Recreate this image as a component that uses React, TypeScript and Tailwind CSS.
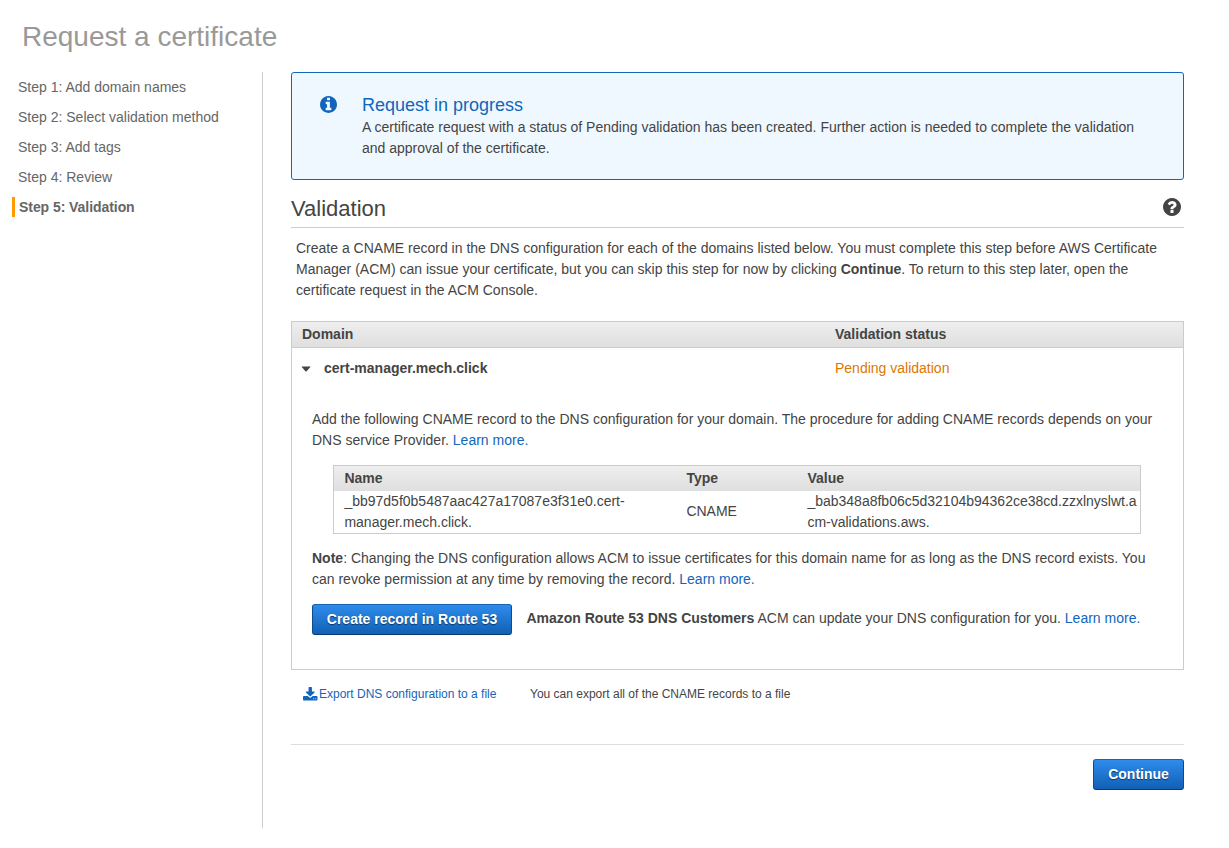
import React from "react";

const steps = [
  "Step 1: Add domain names",
  "Step 2: Select validation method",
  "Step 3: Add tags",
  "Step 4: Review",
];

const disc =
  "q0 209-103 385.5t-279.5 279.5-385.5 103-385.5-103-279.5-279.5-103-385.5 103-385.5 279.5-279.5 385.5-103 385.5 103 279.5 279.5 103 385.5z";

function InfoIcon({ className = "" }: { className?: string }) {
  return (
    <svg viewBox="128 128 1536 1536" className={`fill-current ${className}`}>
      <path
        d={`M1152 1376v-160q0-14-9-23t-23-9h-96v-512q0-14-9-23t-23-9h-320q-14 0-23 9t-9 23v160q0 14 9 23t23 9h96v320h-96q-14 0-23 9t-9 23v160q0 14 9 23t23 9h448q14 0 23-9t9-23zm-128-896v-160q0-14-9-23t-23-9h-192q-14 0-23 9t-9 23v160q0 14 9 23t23 9h192q14 0 23-9t9-23zm640 416${disc}`}
      />
    </svg>
  );
}

function HelpIcon({ className = "" }: { className?: string }) {
  return (
    <svg viewBox="128 128 1536 1536" className={`fill-current ${className}`}>
      <path
        d={`M1024 1376v-192q0-14-9-23t-23-9h-192q-14 0-23 9t-9 23v192q0 14 9 23t23 9h192q14 0 23-9t9-23zm256-672q0-88-55.5-163t-138.5-116-170-41q-243 0-371 213-15 24 8 42l132 100q7 6 19 6 16 0 25-12 53-68 86-92 34-24 86-24 48 0 85.5 26t37.5 59q0 38-20 61t-68 45q-63 28-115.5 86.5t-52.5 125.5v36q0 14 9 23t23 9h192q14 0 23-9t9-23q0-19 21.5-49.5t54.5-49.5q32-18 49-28.5t46-35 44.5-48 28-60.5 12.5-81zm384 192${disc}`}
      />
    </svg>
  );
}

function DownloadIcon({ className = "" }: { className?: string }) {
  return (
    <svg viewBox="64 0 1664 1536" className={`fill-current ${className}`}>
      <path d="M1344 1344q0-26-19-45t-45-19-45 19-19 45 19 45 45 19 45-19 19-45zm256 0q0-26-19-45t-45-19-45 19-19 45 19 45 45 19 45-19 19-45zm128-224v320q0 40-28 68t-68 28h-1472q-40 0-68-28t-28-68v-320q0-40 28-68t68-28h465l135 136q58 56 136 56t136-56l136-136h464q40 0 68 28t28 68zm-325-569q17 41-14 70l-448 448q-18 19-45 19t-45-19l-448-448q-31-29-14-70 17-39 59-39h256v-448q0-26 19-45t45-19h256q26 0 45 19t19 45v448h256q42 0 59 39z" />
    </svg>
  );
}

function Line({ children }: { children: React.ReactNode }) {
  return <span className="block whitespace-nowrap">{children}</span>;
}

function Link({ children }: { children: React.ReactNode }) {
  return <a className="text-[#1166bb]">{children}</a>;
}

function Button({ children, className = "" }: { children: React.ReactNode; className?: string }) {
  return (
    <button
      className={`h-[31px] shrink-0 rounded-[3px] border border-[#0f4a8c] border-t-[#1862b0] border-b-[#093a72] bg-linear-to-b from-[#2e8cec] to-[#1160b4] text-sm leading-[29px] font-bold whitespace-nowrap text-white [text-shadow:0_1px_1px_#0b3764] ${className}`}
    >
      {children}
    </button>
  );
}

function Sidebar() {
  return (
    <nav className="flex h-[756px] w-[263px] shrink-0 flex-col gap-[10px] border-r border-[#cccccc] pt-[5px] pl-3 text-sm leading-5 text-[#666666]">
      {steps.map((step) => (
        <div key={step} className="pl-[6px] whitespace-nowrap">{step}</div>
      ))}
      <div className="border-l-[3px] border-[#ff9900] pl-1 font-bold tracking-[-0.06px]">Step 5: Validation</div>
    </nav>
  );
}

function Notice() {
  return (
    <section className="flex h-[108px] rounded-[3px] border border-[#1166bb] bg-[#f0f8ff] pt-[21px]">
      <div className="w-[70px] shrink-0 pt-[1.5px] pl-[27.5px]">
        <InfoIcon className="size-[17px] text-[#1166bb]" />
      </div>
      <div>
        <h3 className="text-lg leading-[23px] text-[#1166bb]">Request in progress</h3>
        <p>
          <Line>A certificate request with a status of Pending validation has been created. Further action is needed to complete the validation</Line>
          <Line>and approval of the certificate.</Line>
        </p>
      </div>
    </section>
  );
}

function RecordTable() {
  const columns = "grid grid-cols-[342px_121px_1fr] pl-[10.4px]";
  return (
    <div className="mt-[14px] ml-[21px] h-[69px] w-[808px] border border-[#cccccc]">
      <div className={`${columns} h-[25px] bg-linear-to-b from-[#eeeeee] to-[#dfdfdf] leading-[25px] font-bold`}>
        <div>Name</div>
        <div>Type</div>
        <div>Value</div>
      </div>
      <div className={`${columns} h-[42px] items-center`}>
        <div>
          <Line>_bb97d5f0b5487aac427a17087e3f31e0.cert-</Line>
          <Line>manager.mech.click.</Line>
        </div>
        <div className="pb-px">CNAME</div>
        <div>
          <Line>_bab348a8fb06c5d32104b94362ce38cd.zzxlnyslwt.a</Line>
          <Line>cm-validations.aws.</Line>
        </div>
      </div>
    </div>
  );
}

function DomainTable() {
  return (
    <section className="mt-5 h-[349px] border border-[#cccccc]">
      <div className="flex h-[26px] border-b border-[#cccccc] bg-linear-to-b from-[#eeeeee] to-[#dfdfdf] pl-[10px] leading-[25px] font-bold">
        <div className="w-[533px]">Domain</div>
        <div>Validation status</div>
      </div>
      <div className="mt-[10px] flex items-center pl-[9px]">
        <svg viewBox="0 0 10 6" className="mt-[1px] h-[6px] w-[10px] fill-[#444444]">
          <path d="M.9.4h8.4q.5 0 .1.5L5.6 5.2q-.6.6-1.2 0L.8.9Q.4.4.9.4z" />
        </svg>
        <div className="w-[511px] pl-[13px] font-bold">cert-manager.mech.click</div>
        <div className="pl-[13px] text-[#dd7700]">Pending validation</div>
      </div>
      <div className="mt-[30px] pl-5">
        <p>
          <Line>Add the following CNAME record to the DNS configuration for your domain. The procedure for adding CNAME records depends on your</Line>
          <Line>DNS service Provider. <Link>Learn more.</Link></Line>
        </p>
        <RecordTable />
        <p className="mt-[14px]">
          <Line><b>Note</b>: Changing the DNS configuration allows ACM to issue certificates for this domain name for as long as the DNS record exists. You</Line>
          <Line>can revoke permission at any time by removing the record. <Link>Learn more.</Link></Line>
        </p>
        <div className="mt-[14px] flex">
          <Button className="w-[200px]">Create record in Route 53</Button>
          <p className="pt-1 pl-[14.4px]">
            <Line><b>Amazon Route 53 DNS Customers</b> ACM can update your DNS configuration for you. <Link>Learn more.</Link></Line>
          </p>
        </div>
      </div>
    </section>
  );
}

export default function App() {
  return (
    <div className="h-[848px] w-[1229px] overflow-hidden bg-white font-['Liberation_Sans',Arial,sans-serif] text-sm leading-[21px] text-[#444444]">
      <h1 className="h-[72px] pt-[21px] pl-[22px] text-[28px] leading-8 text-[#999999]">Request a certificate</h1>
      <div className="flex">
        <Sidebar />
        <main className="ml-7 w-[893px]">
          <Notice />
          <header className="flex h-12 items-start justify-between border-b border-[#cccccc] pt-4 pr-[3px]">
            <h2 className="text-[22px] leading-[26px]">Validation</h2>
            <HelpIcon className="mt-[2px] size-[18px]" />
          </header>
          <p className="mt-[10px] pl-[5px]">
            <Line>Create a CNAME record in the DNS configuration for each of the domains listed below. You must complete this step before AWS Certificate</Line>
            <Line>Manager (ACM) can issue your certificate, but you can skip this step for now by clicking <b>Continue</b>. To return to this step later, open the</Line>
            <Line>certificate request in the ACM Console.</Line>
          </p>
          <DomainTable />
          <div className="flex h-[74px] items-start pt-[15px] pl-3 text-xs leading-[18px]">
            <a className="flex w-[227px] items-center gap-[1.5px] text-[#1166bb]">
              <DownloadIcon className="h-[13.5px] w-[14.5px]" />
              <span>Export DNS configuration to a file</span>
            </a>
            <span>You can export all of the CNAME records to a file</span>
          </div>
          <footer className="flex justify-end border-t border-[#dddddd] pt-[14px]">
            <Button className="w-[91px]">Continue</Button>
          </footer>
        </main>
      </div>
    </div>
  );
}
